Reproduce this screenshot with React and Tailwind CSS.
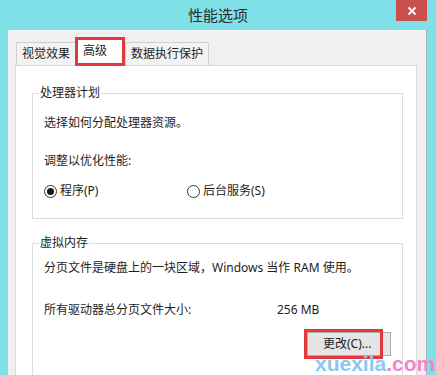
function Radio({ checked, label }) {
    return (
        <label className="flex items-center gap-[3px]">
            <span className="flex h-[13px] w-[13px] items-center justify-center rounded-full border border-[#333] bg-white">
                {checked && <span className="h-[7px] w-[7px] rounded-full bg-[#1a1a1a]" />}
            </span>
            <span>{label}</span>
        </label>
    );
}

export default function App() {
    return (
        <div className="h-[375px] w-[436px] overflow-hidden bg-[#7fe1e7] font-['Noto_Sans','Noto_Sans_CJK_SC',sans-serif] text-[12px] leading-[16px] text-[#1e1e1e] relative">
            {/* title bar */}
            <div className="flex h-[30px] items-center justify-center pb-[1px] text-[15px] text-[#2b2b2b]">
                性能选项
            </div>
            <div className="absolute right-[9px] top-0 flex h-[21px] w-[31px] items-center justify-center bg-[#c9504c] text-white">
                <svg width="10" height="10" viewBox="0 0 10 10">
                    <path d="M1.5 1.5 L8.5 8.5 M8.5 1.5 L1.5 8.5" stroke="white" strokeWidth="1.8" />
                </svg>
            </div>

            {/* client area */}
            <div className="ml-[8px] h-[345px] w-[419px] border-r border-[#9fb5b8] bg-[#f0f0f0] pt-[7px]">
                {/* tabs */}
                <div className="flex h-[28px] items-end pl-[8px]">
                    <div className="h-[23px] border border-b-0 border-[#cfcfcf] bg-[#f3f3f3] px-[5px] pt-[3px]">
                        视觉效果
                    </div>
                    <div className="relative z-10 -mb-[1px] h-[29px] w-[50px] -ml-[1px] border-[3px] border-[#e3383c] bg-white pl-[5px] pt-[3px]">
                        高级
                    </div>
                    <div className="h-[23px] border border-b-0 border-[#cfcfcf] bg-[#f3f3f3] px-[5px] pt-[3px]">
                        数据执行保护
                    </div>
                </div>

                {/* tab panel */}
                <div className="ml-[7px] h-[320px] w-[402px] border border-[#d9d9d9] bg-white pl-[16px] pr-[13px]">
                    <fieldset className="mt-[19px] border border-[#dcdcdc] pl-[6px] pr-[11px] pb-[19px]">
                        <legend className="px-[1px]">处理器计划</legend>
                        <div className="pl-[5px]">
                            <div className="pt-[14px]">选择如何分配处理器资源。</div>
                            <div className="mt-[22px]">调整以优化性能:</div>
                            <div className="mt-[14px] flex">
                                <div className="w-[143px]">
                                    <Radio checked label="程序(P)" />
                                </div>
                                <Radio label="后台服务(S)" />
                            </div>
                        </div>
                    </fieldset>

                    <fieldset className="mt-[16px] h-[200px] border border-[#dcdcdc] pl-[6px] pr-[11px]">
                        <legend className="px-[1px]">虚拟内存</legend>
                        <div className="pl-[5px]">
                            <div className="pt-[9px]">分页文件是硬盘上的一块区域，Windows 当作 RAM 使用。</div>
                            <div className="mt-[26px] flex">
                                <div className="w-[233px]">所有驱动器总分页文件大小:</div>
                                <div>256 MB</div>
                            </div>
                            <div className="mt-[11px] flex justify-end">
                                <div className="relative h-[27px] w-[86px]">
                                    <div className="absolute left-[2px] top-[3px] flex h-[24px] w-[84px] items-center border border-[#adadad] bg-[#e5e5e5] pl-[15px]">
                                        更改(C)...
                                    </div>
                                    <div className="absolute -left-[1px] top-0 h-[30px] w-[79px] border-[3px] border-[#e3383c]" />
                                </div>
                            </div>
                        </div>
                    </fieldset>
                </div>
            </div>

            {/* watermark */}
            <div className="absolute left-[315px] top-[354px] font-['Liberation_Sans',sans-serif] text-[21px] font-bold leading-[20px]">
                <span className="text-[#8bc8f2]">xuexila</span>
                <span className="text-[#f285c4]">.com</span>
            </div>
        </div>
    );
}
